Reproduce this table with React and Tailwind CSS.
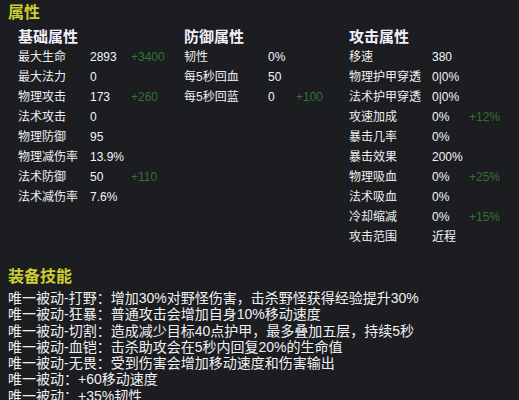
const font = { fontFamily: '"Liberation Sans", "Noto Sans CJK SC", sans-serif' };

const basic = [
    ["最大生命", "2893", "+3400"],
    ["最大法力", "0", ""],
    ["物理攻击", "173", "+260"],
    ["法术攻击", "0", ""],
    ["物理防御", "95", ""],
    ["物理减伤率", "13.9%", ""],
    ["法术防御", "50", "+110"],
    ["法术减伤率", "7.6%", ""],
];

const defense = [
    ["韧性", "0%", ""],
    ["每5秒回血", "50", ""],
    ["每5秒回蓝", "0", "+100"],
];

const attack = [
    ["移速", "380", ""],
    ["物理护甲穿透", "0|0%", ""],
    ["法术护甲穿透", "0|0%", ""],
    ["攻速加成", "0%", "+12%"],
    ["暴击几率", "0%", ""],
    ["暴击效果", "200%", ""],
    ["物理吸血", "0%", "+25%"],
    ["法术吸血", "0%", ""],
    ["冷却缩减", "0%", "+15%"],
    ["攻击范围", "近程", ""],
];

const skills = [
    "唯一被动-打野：增加30%对野怪伤害，击杀野怪获得经验提升30%",
    "唯一被动-狂暴：普通攻击会增加自身10%移动速度",
    "唯一被动-切割：造成减少目标40点护甲，最多叠加五层，持续5秒",
    "唯一被动-血铠：击杀助攻会在5秒内回复20%的生命值",
    "唯一被动-无畏：受到伤害会增加移动速度和伤害输出",
    "唯一被动：+60移动速度",
    "唯一被动：+35%韧性",
];

const StatGroup = ({ title, rows, labelW, valueW, width }) => {
    return (
        <div className={width}>
            <h3 className="text-[15px] font-bold leading-[18px] text-[#f2f0fa]">{title}</h3>
            <div className="mt-px">
                {rows.map(([label, value, bonus]) => (
                    <div key={label} className="flex h-5 items-center text-[12px]">
                        <span className={`${labelW} text-[#eeeeee]`}>{label}</span>
                        <span className={`${valueW} text-[#f4f4f8]`}>{value}</span>
                        <span className="text-[#327332]">{bonus}</span>
                    </div>
                ))}
            </div>
        </div>
    );
};

const App = () => {
    return (
        <div style={font} className="h-[400px] w-[519px] overflow-hidden bg-[#1b1d21] pl-2">
            <h2 className="pt-[3px] text-[16px] font-bold leading-5 text-[#cdcd32]">属性</h2>

            <div className="mt-[5px] flex pl-[10px]">
                <StatGroup title="基础属性" rows={basic} labelW="w-[72px]" valueW="w-[41px]" width="w-[166px]" />
                <StatGroup title="防御属性" rows={defense} labelW="w-[84px]" valueW="w-[28px]" width="w-[165px]" />
                <StatGroup title="攻击属性" rows={attack} labelW="w-[83px]" valueW="w-[37px]" width="w-[160px]" />
            </div>

            <h2 className="mt-[20px] text-[16px] font-bold leading-5 text-[#cdcd32]">装备技能</h2>
            <div className="mt-[3px] text-[14px] leading-[16.25px] text-[#f0f0f0]">
                {skills.map((s) => (
                    <p key={s} className="whitespace-nowrap">{s}</p>
                ))}
            </div>
        </div>
    );
};

export default App;
